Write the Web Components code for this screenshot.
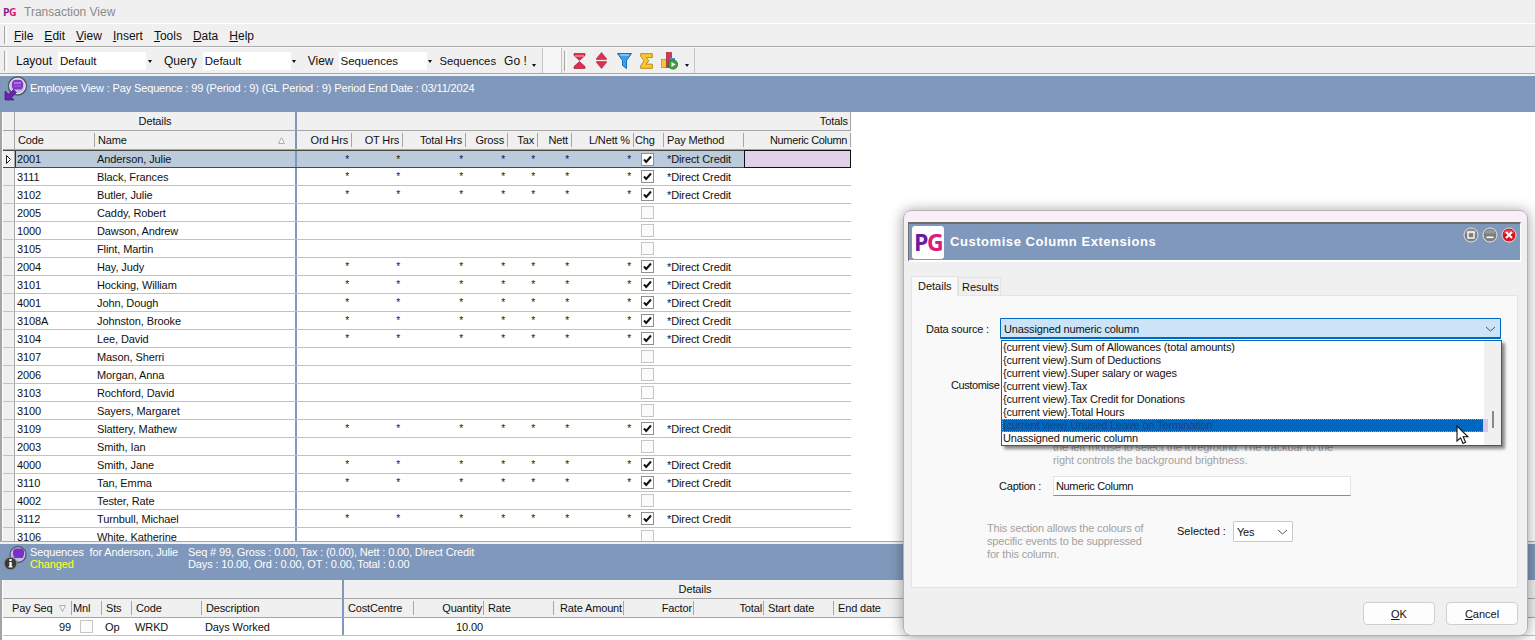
<!DOCTYPE html>
<html lang="en">
<head>
<meta charset="utf-8">
<title>Transaction View</title>
<style>
  html, body { margin: 0; height: 100%; overflow: hidden; }
  body { font: 11px "Liberation Sans", Arial, sans-serif; color: #111; background: #f0f0f0; }
  pg-app { width: 1535px; height: 640px; }
</style>
</head>
<body>
<pg-app>
  <pg-titlebar>Transaction View</pg-titlebar>
  <pg-menubar items="File,Edit,View,Insert,Tools,Data,Help"></pg-menubar>
  <pg-toolbar></pg-toolbar>
  <pg-banner icon="view" style="height:36px">
    <span>Employee View : Pay Sequence : 99 (Period : 9) (GL Period : 9) Period End Date : 03/11/2024</span>
  </pg-banner>
  <pg-employee-grid></pg-employee-grid>
  <pg-splitter></pg-splitter>
  <pg-banner icon="info" style="height:36px">
    <pg-two-lines style="width:158px"><span>Sequences&nbsp; for Anderson, Julie</span><span style="color:#ffff30">Changed</span></pg-two-lines>
    <pg-two-lines><span>Seq # 99, Gross : 0.00, Tax : (0.00), Nett : 0.00, Direct Credit</span><span>Days : 10.00, Ord : 0.00, OT : 0.00, Total : 0.00</span></pg-two-lines>
  </pg-banner>
  <pg-sequence-grid></pg-sequence-grid>
  <pg-dialog heading="Customise Column Extensions"></pg-dialog>
</pg-app>

<script>
// helper: every element gets its shadow root from one html string
function mount(el, html) {
  el.attachShadow({ mode: "open" }).innerHTML = html;
}

class PgApp extends HTMLElement {
  constructor() {
    super();
    mount(this, `<style>
      :host { display: flex; flex-direction: column; position: relative; overflow: hidden; background: #f0f0f0; }
    </style><slot></slot>`);
  }
}

class PgTitlebar extends HTMLElement {
  constructor() {
    super();
    mount(this, `<style>
      :host { display: flex; align-items: center; height: 23px; border-bottom: 1px solid #fff; padding-left: 3px; font-size: 12px; color: #8a8a8a; }
      b { width: 21px; font: bold 10.5px "Open Sans", sans-serif; color: #8e1b9c; letter-spacing: -.5px; }
      b i { font-style: normal; color: #e01a7c; }
    </style><b>P<i>G</i></b><slot></slot>`);
  }
}

class PgMenubar extends HTMLElement {
  constructor() {
    super();
    const items = this.getAttribute("items").split(",");
    mount(this, `<style>
      :host { display: flex; align-items: center; height: 21px; padding: 1px 0 0 4px; border-bottom: 1px solid #ababab; }
      i { width: 1px; height: 18px; margin: -1px 7px 0 0; border-left: 1px solid #a8a8a8; border-right: 1px solid #fff; }
      span { margin-right: 11px; font-size: 12px; }
      u { text-underline-offset: 1px; }
    </style><i></i>` + items.map(t => `<span><u>${t[0]}</u>${t.slice(1)}</span>`).join(""));
  }
}

class PgCombo extends HTMLElement {
  constructor() {
    super();
    mount(this, `<style>
      :host { display: flex; align-items: center; width: 95px; height: 18px; background: #fff; box-sizing: border-box; padding-left: 2px; font-size: 11.5px; }
      div { flex: 1; }
      span { width: 7px; align-self: stretch; background: #f0f0f0; display: flex; align-items: center; justify-content: center; }
      span::after { content: ""; border: 2.5px solid transparent; border-top: 3px solid #111; margin-top: 3px; }
    </style><div><slot></slot></div><span></span>`);
  }
}

class PgToolIcon extends HTMLElement {
  static shapes = {
    hourglass: `<svg width="13" height="16" viewBox="0 0 13 16"><path d="M1 .5H12V2.5L6.5 7.5 1 2.5Z" fill="#d8304e" stroke="#a81c38" stroke-width=".7"/><path d="M6.5 8.5 12 13.5V15.5H1V13.5Z" fill="#d8304e" stroke="#a81c38" stroke-width=".7"/><path d="M2 3H11" stroke="#f6b8c2"/></svg>`,
    updown: `<svg width="11" height="17" viewBox="0 0 11 17"><path d="M5.5 .5 10.5 6.5V7.5H.5V6.5Z" fill="#d8324e" stroke="#b22a44" stroke-width=".6"/><path d="M.5 9.5H10.5V10.5L5.5 16.5.5 10.5Z" fill="#d8324e" stroke="#b22a44" stroke-width=".6"/></svg>`,
    funnel: `<svg width="15" height="16" viewBox="0 0 15 16"><path d="M.5.5H14.5L9.5 7.5V15.5L5.5 12.5V7.5Z" fill="#39a0ec" stroke="#1a6db4"/><path d="M3 2H12" stroke="#bfe2fb"/></svg>`,
    sigma: `<svg width="13" height="16" viewBox="0 0 13 16"><path d="M.7.7H12.3V4.6H6.2L8.8 7.8 6.2 11.2H12.3V15.3H.7V12.6L4.2 7.9.7 3.3Z" fill="#f7c830" stroke="#c4880f"/></svg>`,
    chart: `<svg width="17" height="19" viewBox="0 0 17 19"><rect x=".5" y="8.5" width="5" height="8" fill="#f3c53a" stroke="#b98a12" stroke-width=".7"/><rect x="5.5" y="1.5" width="5" height="15" fill="#d9364e" stroke="#a3243a" stroke-width=".7"/><rect x="9" y="7" width="5" height="5" fill="#4a90d9"/><circle cx="12" cy="13.5" r="4.6" fill="#3aa43a" stroke="#1f6d1f" stroke-width=".8"/><path d="M10.5 11V16L14.6 13.5Z" fill="#fff"/></svg>`
  };
  constructor() {
    super();
    mount(this, `<style>:host { display: flex; align-items: center; } svg { display: block; }</style>`
      + PgToolIcon.shapes[this.getAttribute("name")]);
  }
}

class PgToolbar extends HTMLElement {
  constructor() {
    super();
    mount(this, `<style>
      :host { display: flex; height: 25px; border-top: 1px solid #f8f8f8; border-bottom: 1px solid #a8a8a8; margin-bottom: 2px; font-size: 12px; }
      .band { display: flex; align-items: center; white-space: nowrap; }
      .one { width: 538px; padding-left: 4px; border-right: 1px solid #c4c4c4; }
      .gap { width: 18px; background: #f6f6f6; border-right: 1px solid #c4c4c4; }
      .two { padding-left: 2px; width: 130px; border-right: 1px solid #c4c4c4; }
      .grip { flex: none; width: 1px; height: 20px; border-left: 1px solid #a8a8a8; border-right: 1px solid #fff; }
      .lbl { margin: 0 6px 0 11px; }
      .more { flex: none; width: 0; height: 0; border: 2.5px solid transparent; border-top: 3px solid #111; margin-top: 12px; }
    </style>
    <div class="band one">
      <div class="grip"></div>
      <span class="lbl" style="margin-left:9px">Layout</span><pg-combo>Default</pg-combo>
      <span class="lbl">Query</span><pg-combo>Default</pg-combo>
      <span class="lbl" style="margin-left:10px;margin-right:5px">View</span><pg-combo>Sequences</pg-combo>
      <span style="margin-left:6px;font-size:11.3px">Sequences</span>
      <span style="margin-left:8px">Go !</span>
      <span class="more" style="margin-left:5px"></span>
    </div>
    <div class="gap"></div>
    <div class="band two">
      <div class="grip"></div>
      <pg-tool-icon name="hourglass" style="margin-left:6px"></pg-tool-icon>
      <pg-tool-icon name="updown" style="margin-left:10px"></pg-tool-icon>
      <pg-tool-icon name="funnel" style="margin-left:10px"></pg-tool-icon>
      <pg-tool-icon name="sigma" style="margin-left:8px"></pg-tool-icon>
      <pg-tool-icon name="chart" style="margin-left:8px"></pg-tool-icon>
      <span class="more" style="margin-left:7px"></span>
    </div>`);
  }
}

class PgBanner extends HTMLElement {
  constructor() {
    super();
    const view = `<svg width="28" height="26" viewBox="0 0 28 26">
      <circle cx="15.500" cy="10" r="9" fill="#c3bce4" stroke="#4f5a68" stroke-width="1.500"/>
      <circle cx="15.500" cy="10" r="7.700" fill="none" stroke="#eceaf4"/>
      <path d="M10 6.500 12 4H19L21 6.500V11L19.500 13.500H11.500L10 11Z" fill="#8436c8"/>
      <path d="M12 7H19" stroke="#d7b4f4"/><path d="M12 10H19" stroke="#a866e0"/>
      <path d="M3 15V24H12L9.600 21.300 14.500 16.500 11.500 13.500 6.600 18.300Z" fill="#6a23ac" stroke="#3a1170" stroke-width=".6"/>
    </svg>`;
    const info = `<svg width="27" height="26" viewBox="0 0 27 26">
      <circle cx="15" cy="9.500" r="8" fill="#c3bce4" stroke="#4f5a68" stroke-width="1.300"/>
      <path d="M10 5.500 12 3.500H19L21 5.500V10L19.500 13H11.500L10 10Z" fill="#7a30c4"/>
      <circle cx="7.500" cy="18.500" r="6.300" fill="#3a3a3a" stroke="#8c8c8c"/>
      <rect x="6.400" y="17" width="2.300" height="5" fill="#fff"/><rect x="5.600" y="21.300" width="4" height="1.100" fill="#fff"/>
      <rect x="6.400" y="14" width="2.300" height="2" fill="#fff"/>
    </svg>`;
    const kind = this.getAttribute("icon");
    mount(this, `<style>
      :host { display: flex; align-items: flex-start; background: #7f98bb; color: #fff; box-sizing: border-box; font-size: 11px; letter-spacing: -.14px; }
      .ic { flex: none; width: 30px; }
      .ic svg { display: block; margin: ${kind === "view" ? "0 0 0 2px" : "1px 0 0 3px"}; }
      .txt { display: flex; padding-top: ${kind === "view" ? "6px" : "2px"}; }
    </style><div class="ic">${kind === "view" ? view : info}</div><div class="txt"><slot></slot></div>`);
  }
}

class PgTwoLines extends HTMLElement {
  constructor() {
    super();
    mount(this, `<style>
      :host { display: flex; flex-direction: column; line-height: 12px; }
      ::slotted(span) { display: block; }
    </style><slot></slot>`);
  }
}

class PgSplitter extends HTMLElement {
  constructor() {
    super();
    mount(this, `<style>:host { display: block; height: 3px; box-sizing: border-box; background: #f0f0f0; border-top: 1px solid #a8a8a8; }</style>`);
  }
}

// base grid, the subclasses only give columns and rows
class PgGrid extends HTMLElement {
  constructor() {
    super();
    this.build();
  }

  checkbox(on) {
    const tick = on ? `<path d="M3 6.500 5.200 9 10 3.500" fill="none" stroke="#111" stroke-width="2"/>` : "";
    const edge = on ? "#8f8f8f" : "#c6c6c6";
    const fill = on ? "#fff" : "#fbfbfb";
    return `<svg width="13" height="13" viewBox="0 0 13 13"><rect x=".5" y=".5" width="12" height="12" fill="${fill}" stroke="${edge}"/>${tick}</svg>`;
  }

  sortMark(up) {
    const d = up ? "M.5 6.500H6.500L3.500 .5Z" : "M.5 .5H6.500L3.500 6.500Z";
    return `<svg class="sort" width="7" height="7" viewBox="0 0 7 7"><path d="${d}" fill="#f6f6f6" stroke="#b0b0b0"/></svg>`;
  }

  headCell(c) {
    const mark = c.sort ? this.sortMark(c.sort === "up") : "";
    const ls = c.ls ? `letter-spacing:${c.ls}px;` : "";
    const pl = c.box ? "padding-left:1px;" : "";
    return `<div class="cell head ${c.right ? "r" : ""}" style="width:${c.w}px;${ls}${pl}"><span>${c.t}</span>${mark}</div>`;
  }

  bodyCell(c, v, row) {
    let inner = v == null ? "" : v;
    if (c.box) inner = this.checkbox(v);
    if (v === "*") inner = `<span class="star">*</span>`;
    const cls = `cell ${c.right ? "r" : ""} ${c.box ? "box" : ""} ${c.sep ? "sep" : ""} ${c.current && row.sel ? "cur" : ""}`;
    const pad = c.bodyPad ? `padding-left:${c.bodyPad}px;` : "";
    return `<div class="${cls}" style="width:${c.w}px;${pad}">${inner}</div>`;
  }
}

const gridStyle = `
  :host { display: block; overflow: hidden; background: #fff; border-left: 2px solid #a4a4a4; padding-left: 1px; font-size: 11px; letter-spacing: -.1px; }
  .line { display: flex; height: 18px; width: max-content; box-sizing: border-box; border-bottom: 1px solid #c2c2c2; }
  .hrow { display: flex; height: 19px; box-sizing: border-box; background: #f0f0f0; border-bottom: 1px solid #a6a6a6; width: max-content; min-width: 100%; }
  .ind { flex: none; width: 12px; box-sizing: border-box; background: #f0f0f0; border-right: 1px solid #a6a6a6; display: flex; align-items: center; justify-content: center; }
  .cell { flex: none; box-sizing: border-box; display: flex; align-items: center; white-space: nowrap; padding: 0 2px; }
  .r { justify-content: flex-end; padding-right: 3px; }
  .box { justify-content: center; padding: 0 4px 0 0; }
  .sep { border-right: 2px solid #7f98bb; }
  .head { margin: 2px 0; border-right: 1px solid #a6a6a6; padding-left: 3px; letter-spacing: -.15px; }
  .head .sort { margin-left: auto; margin-right: 8px; }
  .head.bar { margin: 0; border-right: 2px solid #7f98bb; }
  .group { flex: none; box-sizing: border-box; display: flex; align-items: center; justify-content: center; }
  .line.sel { background: #bccbdb; border-top: 1px solid #4b4a42; border-bottom: 1px solid #4b4a42; }
  .line.sel .ind { background: #f0f0f0; }
  .line.sel .cell:nth-child(2) { box-shadow: inset 1px 0 0 #333; }
  .cell.cur { background: #e0d0ea; box-shadow: inset 0 0 0 1px #111; margin: -1px 0; }
  .star { font-size: 10px; }
`;

class PgEmployeeGrid extends PgGrid {
  build() {
    const cols = [
      { t: "Code", w: 80 },
      { t: "Name", w: 202, sort: "up", sep: true },
      { t: "Ord Hrs", w: 55, right: true },
      { t: "OT Hrs", w: 51, right: true },
      { t: "Total Hrs", w: 63, right: true },
      { t: "Gross", w: 42, right: true },
      { t: "Tax", w: 30, right: true },
      { t: "Nett", w: 34, right: true },
      { t: "L/Nett %", w: 62, right: true },
      { t: "Chg", w: 30, box: true },
      { t: "Pay Method", w: 80, bodyPad: 3 },
      { t: "Numeric Column", w: 107, right: true, current: true, ls: -.35 }
    ];
    const people = [
      ["2001", "Anderson, Julie", 1], ["3111", "Black, Frances", 1], ["3102", "Butler, Julie", 1],
      ["2005", "Caddy, Robert", 0], ["1000", "Dawson, Andrew", 0], ["3105", "Flint, Martin", 0],
      ["2004", "Hay, Judy", 1], ["3101", "Hocking, William", 1], ["4001", "John, Dough", 1],
      ["3108A", "Johnston, Brooke", 1], ["3104", "Lee, David", 1], ["3107", "Mason, Sherri", 0],
      ["2006", "Morgan, Anna", 0], ["3103", "Rochford, David", 0], ["3100", "Sayers, Margaret", 0],
      ["3109", "Slattery, Mathew", 1], ["2003", "Smith, Ian", 0], ["4000", "Smith, Jane", 1],
      ["3110", "Tan, Emma", 1], ["4002", "Tester, Rate", 0], ["3112", "Turnbull, Michael", 1],
      ["3106", "White, Katherine", 0]
    ];
    const marker = `<svg width="5" height="9" viewBox="0 0 5 9"><path d="M.5.5 4.500 4.500.5 8.500Z" fill="#fff" stroke="#222"/></svg>`;
    const rows = people.map(([code, name, paid], i) => {
      const row = { sel: i === 0 };
      const star = paid ? "*" : "";
      const vals = [code, name, star, star, star, star, star, star, star, !!paid, paid ? "*Direct Credit" : "", ""];
      return `<div class="line ${row.sel ? "sel" : ""}"><div class="ind">${row.sel ? marker : ""}</div>`
        + cols.map((c, n) => this.bodyCell(c, vals[n], row)).join("") + `</div>`;
    }).join("");

    mount(this, `<style>${gridStyle}
      :host { height: 429px; }
      .hrow { min-width: 0; }
    </style>
    <div class="hrow"><div class="ind"></div>
      <div class="group" style="width:282px;border-right:2px solid #7f98bb">Details</div>
      <div class="group" style="width:554px;justify-content:flex-end;padding-right:2px;border-right:1px solid #a6a6a6">Totals</div>
    </div>
    <div class="hrow"><div class="ind"></div>${cols.map(c => {
      if (c.sep) return `<div class="cell head bar" style="width:${c.w}px"><span>${c.t}</span>${this.sortMark(true)}</div>`;
      return this.headCell(c);
    }).join("")}</div>
    ${rows}`);
  }
}

class PgSequenceGrid extends PgGrid {
  build() {
    const cols = [
      { t: "Pay Seq", w: 69, right: true, sort: "down" },
      { t: "Mnl", w: 30, box: true },
      { t: "Sts", w: 30 },
      { t: "Code", w: 70 },
      { t: "Description", w: 142, sep: true },
      { t: "CostCentre", w: 70 },
      { t: "Quantity", w: 70, right: true },
      { t: "Rate", w: 70 },
      { t: "Rate Amount", w: 70, right: true },
      { t: "Factor", w: 70, right: true },
      { t: "Total", w: 70, right: true },
      { t: "Start date", w: 70 },
      { t: "End date", w: 70 }
    ];
    const vals = ["99", false, "Op", "WRKD", "Days Worked", "", "10.00"];
    const heads = cols.map(c => {
      if (c.sep) return `<div class="cell head bar" style="width:${c.w}px"><span>${c.t}</span></div>`;
      if (c.sort) return `<div class="cell head" style="width:${c.w}px;padding-left:9px"><span>${c.t}</span>${this.sortMark(false).replace('class="sort"', 'style="margin-left:6px"')}</div>`;
      return this.headCell(c);
    }).join("");
    mount(this, `<style>${gridStyle}
      :host { flex: 1; }
      .cell { padding-left: 3px; }
      .head { padding-left: 4px; }
      .r { padding-right: 1px; }
      .box { padding: 0 2px 0 0; }
    </style>
    <div class="hrow">
      <div class="group" style="width:341px;border-right:2px solid #7f98bb"></div>
      <div class="group" style="width:702px">Details</div>
    </div>
    <div class="hrow">${heads}</div>
    <div class="line" style="min-width:100%">${cols.map((c, n) => this.bodyCell(c, vals[n], {})).join("")}</div>`);
  }
}

class PgWinButton extends HTMLElement {
  constructor() {
    super();
    const kind = this.getAttribute("kind");
    const red = kind === "close";
    const glyph = {
      restore: `<rect x="5" y="5" width="6" height="6" fill="none" stroke="#fff" stroke-width="1.400"/>`,
      min: `<rect x="4.500" y="9.500" width="7" height="1.600" fill="#fff"/>`,
      close: `<path d="M5 5 11 11M11 5 5 11" stroke="#fff" stroke-width="2"/>`
    }[kind];
    mount(this, `<style>:host { display: block; width: 16px; height: 16px; } svg { display: block; }</style>
    <svg width="16" height="16" viewBox="0 0 16 16">
      <circle cx="8" cy="8" r="7" fill="${red ? "#d8141c" : "#7d7d7d"}" stroke="#e4e4e4"/>
      <path d="M2.500 6.500A5.600 4.600 0 0 1 13.500 6.500Z" fill="#fff" opacity=".22"/>${glyph}
    </svg>`);
  }
}

class PgButton extends HTMLElement {
  constructor() {
    super();
    mount(this, `<style>
      :host { display: flex; align-items: center; justify-content: center; width: 72px; height: 23px; box-sizing: border-box; background: #fdfdfd; border: 1px solid #cfcfcf; border-radius: 4px; }
    </style><slot></slot>`);
  }
}

class PgDropdown extends HTMLElement {
  constructor() {
    super();
    const items = ["Sum of Allowances (total amounts)", "Sum of Deductions", "Super salary or wages", "Tax", "Tax Credit for Donations", "Total Hours"];
    mount(this, `<style>
      :host { position: absolute; left: 89px; top: 44px; width: 501px; height: 106px; box-sizing: border-box; background: #fff; border: 1px solid #0067c0; box-shadow: 3px 3px 3px rgba(0,0,0,.45); display: flex; z-index: 2; }
      .list { flex: 1; min-width: 0; }
      .it { height: 13px; line-height: 13px; padding-left: 1px; white-space: nowrap; }
      .on { box-sizing: border-box; background: #0067c0; color: #23437c; outline: 1px dotted #e58a1f; outline-offset: -1px; display: flex; }
      .lilac { position: absolute; left: 481px; top: 78px; width: 5px; height: 13px; background: #d9c8e6; }
      .bar { flex: none; width: 17px; background: #f0f0f0; display: flex; justify-content: center; }
      .thumb { width: 2px; height: 17px; margin-top: 70px; background: #8a8a8a; }
    </style>
    <div class="list">
      ${items.map(t => `<div class="it">{current view}.${t}</div>`).join("")}
      <div class="it on">{current view}.Unused Leave on Termination</div>
      <div class="it">Unassigned numeric column</div>
    </div>
    <div class="lilac"></div>
    <div class="bar"><div class="thumb"></div></div>`);
  }
}

class PgSelect extends HTMLElement {
  constructor() {
    super();
    mount(this, `<style>
      :host { display: flex; align-items: center; box-sizing: border-box; height: 21px; border: 1px solid #c8c8c8; background: #fff; border-radius: 1px; padding: 0 4px 0 3px; }
      div { flex: 1; white-space: nowrap; }
      svg { display: block; }
      :host([focused]) { background: #cce4f7; border-color: #0067c0; border-bottom-width: 2px; padding-top: 1px; }
    </style><div><slot></slot></div>
    <svg width="11" height="6" viewBox="0 0 11 6"><path d="M1 1 5.500 5 10 1" fill="none" stroke="#555"/></svg>`);
  }
}

class PgDialog extends HTMLElement {
  constructor() {
    super();
    mount(this, `<style>
      :host { position: absolute; left: 903px; top: 210px; width: 625px; height: 426px; box-sizing: border-box; display: flex; flex-direction: column; border: 1px solid #b4b0b4; border-radius: 8px; box-shadow: 0 1px 14px rgba(0,0,0,.4); padding: 11px 0 0 4px; background: linear-gradient(#f9eff8 11px, #f0f0f0 11px); font-size: 11px; letter-spacing: -.15px; z-index: 5; }
      .head { display: flex; align-items: center; width: 613px; height: 40px; flex: none; box-sizing: border-box; background: #7f98bb; border-top: 2px solid #6e6e6e; border-left: 1px solid #6e6e6e; border-right: 1px solid #fff; border-bottom: 2px solid #fff; color: #fff; letter-spacing: 0; }
      .logo { width: 32px; height: 33px; margin-left: 3px; background: #fff; border-radius: 3px; display: flex; align-items: center; justify-content: center; font: bold 23px "Open Sans", sans-serif; letter-spacing: -1.500px; color: #6c1aa0; }
      .logo i { font-style: normal; color: #dc1a80; }
      .ttl { margin: -2px 0 0 6px; font-weight: bold; font-size: 13px; letter-spacing: .55px; flex: 1; }
      .wb { display: flex; gap: 3px; margin: -14px 3px 0 0; }
      .tabs { display: flex; align-items: flex-end; height: 20px; flex: none; margin: 13px 0 0 3px; letter-spacing: 0; }
      .tab { box-sizing: border-box; background: #f0f0f0; border: 1px solid #e4e4e4; border-bottom: 0; display: flex; align-items: center; padding-bottom: 2px; }
      .tab.on { height: 20px; width: 47px; background: #f9f9f9; z-index: 1; margin-bottom: -1px; padding-left: 6px; }
      .tab.off { width: 43px; padding-left: 3px; height: 18px; padding-bottom: 0; }
      .panel { position: relative; width: 607px; height: 293px; flex: none; margin-left: 3px; box-sizing: border-box; background: #f9f9f9; border: 1px solid #e4e4e4; }
      .row { display: flex; align-items: center; white-space: nowrap; }
      .src { margin-top: 22px; padding-left: 14px; }
      .src label { width: 74px; letter-spacing: -.2px; }
      .cust { margin-top: 39px; padding-left: 39px; height: 13px; letter-spacing: -.4px; }
      .note { color: #a2a2a2; line-height: 13px; }
      .n1 { margin: 50px 0 0 141px; letter-spacing: -.1px; }
      .cap { margin-top: 9px; padding-left: 87px; }
      .cap label { width: 54px; letter-spacing: -.2px; }
      .inp { width: 298px; height: 20px; box-sizing: border-box; background: #fff; border: 1px solid #e4e4e4; border-bottom: 1px solid #8a8a8a; padding: 0 2px; display: flex; align-items: center; letter-spacing: -.35px; }
      .sup { margin-top: 25px; padding-left: 75px; align-items: flex-start; }
      .sup .note { width: 190px; padding-top: 1px; }
      .sup label { margin-right: 7px; line-height: 21px; letter-spacing: 0; }
      .foot { display: flex; justify-content: flex-end; gap: 11px; margin-top: 14px; padding-right: 9px; letter-spacing: 0; }
      .cursor { position: absolute; left: 544px; top: 129px; z-index: 3; display: block; }
    </style>
    <div class="head">
      <div class="logo">P<i>G</i></div>
      <div class="ttl">${this.getAttribute("heading")}</div>
      <div class="wb"><pg-win-button kind="restore"></pg-win-button><pg-win-button kind="min"></pg-win-button><pg-win-button kind="close"></pg-win-button></div>
    </div>
    <div class="tabs"><div class="tab on">Details</div><div class="tab off">Results</div></div>
    <div class="panel">
      <div class="row src"><label>Data source :</label><pg-select focused style="width:501px">Unassigned numeric column</pg-select></div>
      <div class="row cust">Customise</div>
      <div class="note n1">the left mouse to select the foreground. The trackbar to the<br>right controls the background brightness.</div>
      <div class="row cap"><label>Caption :</label><div class="inp">Numeric Column</div></div>
      <div class="row sup">
        <div class="note">This section allows the colours of<br>specific events to be suppressed<br>for this column.</div>
        <label>Selected :</label><pg-select style="width:60px">Yes</pg-select>
      </div>
      <pg-dropdown></pg-dropdown>
      <svg class="cursor" width="13" height="20" viewBox="0 0 13 20"><path d="M1 1V16L4.600 12.800 7 18.400 9.600 17.200 7.200 11.800H12Z" fill="#fff" stroke="#111" stroke-width="1.100"/></svg>
    </div>
    <div class="foot"><pg-button><span><u>O</u>K</span></pg-button><pg-button><span><u>C</u>ancel</span></pg-button></div>`);
  }
}

customElements.define("pg-app", PgApp);
customElements.define("pg-titlebar", PgTitlebar);
customElements.define("pg-menubar", PgMenubar);
customElements.define("pg-combo", PgCombo);
customElements.define("pg-tool-icon", PgToolIcon);
customElements.define("pg-toolbar", PgToolbar);
customElements.define("pg-banner", PgBanner);
customElements.define("pg-two-lines", PgTwoLines);
customElements.define("pg-splitter", PgSplitter);
customElements.define("pg-employee-grid", PgEmployeeGrid);
customElements.define("pg-sequence-grid", PgSequenceGrid);
customElements.define("pg-win-button", PgWinButton);
customElements.define("pg-button", PgButton);
customElements.define("pg-dropdown", PgDropdown);
customElements.define("pg-select", PgSelect);
customElements.define("pg-dialog", PgDialog);
</script>
</body>
</html>
